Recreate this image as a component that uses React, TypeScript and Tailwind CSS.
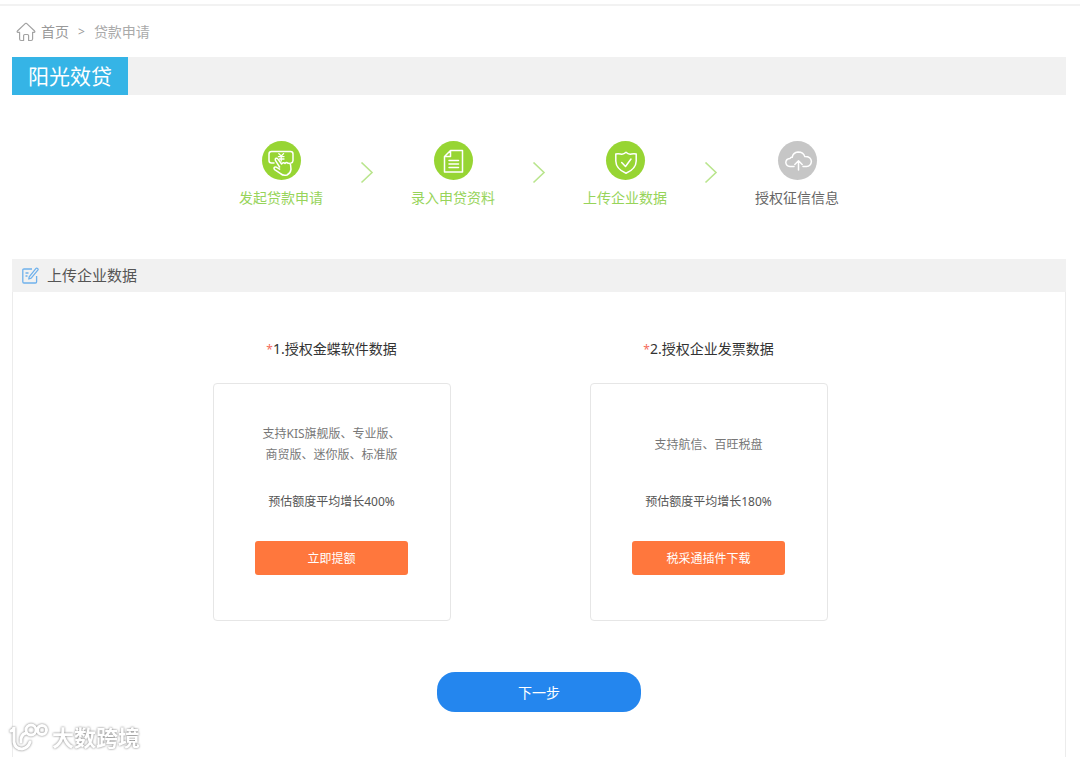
import React from 'react';

type StepIcon = 'apply' | 'document' | 'shield' | 'cloud';

interface Step {
  label: string;
  icon: StepIcon;
  done: boolean;
}

interface DataSource {
  title: string;
  lines: string[];
  estimate: string;
  action: string;
}

const steps: Step[] = [
  { label: '发起贷款申请', icon: 'apply', done: true },
  { label: '录入申贷资料', icon: 'document', done: true },
  { label: '上传企业数据', icon: 'shield', done: true },
  { label: '授权征信信息', icon: 'cloud', done: false },
];

const sources: DataSource[] = [
  {
    title: '1.授权金蝶软件数据',
    lines: ['支持KIS旗舰版、专业版、', '商贸版、迷你版、标准版'],
    estimate: '预估额度平均增长400%',
    action: '立即提额',
  },
  {
    title: '2.授权企业发票数据',
    lines: ['支持航信、百旺税盘'],
    estimate: '预估额度平均增长180%',
    action: '税采通插件下载',
  },
];

const iconShapes: Record<StepIcon, React.ReactNode> = {
  apply: (
    <>
      <path d="M12 22H9.5Q7 22 7 19.5V13Q7 10.5 9.5 10.5H28.5Q31 10.5 31 13V19.5Q31 21.5 29 22" />
      <path
        d="M17.6 26L13.4 19.4Q12.8 17.8 14 17.3Q15.2 16.9 16 18.1L19.6 23Q21.4 20.8 23 22.4Q24.6 20.6 26 22.4Q28 21.6 28.6 24L29 28.4Q28.6 32.2 25 34Q21 35 18.6 32.6L12.6 28.6Q11.4 27.2 12.6 26.2Q13.8 25.6 15.2 26.6L17.6 28.2"
        fill="#97d533"
      />
      <path d="M16.8 12.6L19.2 15L21.6 12.6M19.2 15V20M16.4 15.6H22M17.4 18H22" strokeWidth="1.3" />
    </>
  ),
  document: (
    <>
      <path d="M16.5 9.5H28.5V31H10.5V15.5ZM16.5 9.5V15.5H10.5" />
      <path d="M15 19.5H24.5M15 23H24.5M15 26.5H24.5" />
    </>
  ),
  shield: (
    <>
      <path d="M20 11.3Q17.5 13.8 14.5 13Q12 12.4 9.8 13V20Q10 28 20 32.3Q30 28 30.2 20V13Q28 12.4 25.5 13Q22.5 13.8 20 11.3Z" />
      <path d="M15.7 21.5L19.5 25.5L25 18" />
    </>
  ),
  cloud: (
    <>
      <path d="M16 25.5H12Q8 25 7.8 21.5Q8 17.8 12 17.5Q12.6 16 14.2 16.3Q15 11.5 20 11Q25.5 11 26.8 15.6Q33 15.5 33.4 20.5Q33 25.2 28.5 25.5H25" />
      <path d="M20.5 29V20M16.8 23.5L20.5 19.8L24.2 23.5" />
    </>
  ),
};

function HomeIcon() {
  return (
    <svg width="20" height="20" viewBox="0 0 20 20" fill="none" stroke="#a3a3a3" strokeWidth="1.2" strokeLinejoin="round" strokeLinecap="round" aria-hidden="true">
      <path d="M3.6 10.4H1.8Q0.6 10 1.4 9L9.2 1.6Q10 1 10.8 1.6L18.6 9Q19.4 10 18.2 10.4H16.6V17Q16.5 18.4 15.2 18.5H12.6V13.6Q12.5 12.6 11.5 12.5H8.7Q7.7 12.6 7.6 13.6V18.5H5Q3.7 18.4 3.6 17Z" />
    </svg>
  );
}

function EditIcon() {
  return (
    <svg width="17" height="17" viewBox="0 0 17 17" fill="none" stroke="#6fb1ec" strokeWidth="1.3" strokeLinejoin="round" aria-hidden="true">
      <path d="M10 2H2Q0.8 2 0.8 3.2V14.8Q0.8 16 2 16H13.4Q14.6 16 14.6 14.8V9" />
      <path d="M7.2 9.8L13.8 1.6Q14.6 0.7 15.6 1.5Q16.5 2.3 15.8 3.2L9.2 11.2L6.8 12Z" />
      <path d="M3.5 6H6.5M3.5 9H5.5" />
    </svg>
  );
}

function StepArrow() {
  return (
    <svg className="mb-1 shrink-0" width="14" height="22" viewBox="0 0 14 22" fill="none" stroke="#b9e58d" strokeWidth="1.6" aria-hidden="true">
      <path d="M1.5 0.5L12 10.5L1.5 20.5" />
    </svg>
  );
}

function StepItem({ step }: { step: Step }) {
  return (
    <div className="flex flex-col items-center gap-2">
      <span className={`h-[39px] w-[39px] rounded-full ${step.done ? 'bg-[#97d533]' : 'bg-[#c6c6c6]'}`}>
        <svg width="39" height="39" viewBox="0 0 39 39" fill="none" stroke="#fff" strokeWidth="1.5" strokeLinejoin="round" strokeLinecap="round" aria-hidden="true">
          {iconShapes[step.icon]}
        </svg>
      </span>
      <span className={`whitespace-nowrap text-sm ${step.done ? 'text-[#97d45a]' : 'text-[#666]'}`}>{step.label}</span>
    </div>
  );
}

function SourceCard({ source }: { source: DataSource }) {
  return (
    <div className="flex flex-col items-center gap-6">
      <h3 className="text-sm leading-5 text-[#333]">
        <span className="text-xs text-[#f56c5c]">*</span>
        {source.title}
      </h3>
      <div className="flex h-[238px] w-[238px] flex-col items-center rounded-sm border border-[#e6e6e6] pt-[39px] text-xs">
        <div className="flex h-[42px] flex-col justify-center text-center leading-[21px] text-[#777]">
          {source.lines.map((line) => (
            <p key={line}>{line}</p>
          ))}
        </div>
        <p className="mt-[27px] leading-5 text-[#555]">{source.estimate}</p>
        <button type="button" className="mt-[29px] h-[34px] w-[153px] rounded-[3px] bg-[#ff773d] pt-px text-white">
          {source.action}
        </button>
      </div>
    </div>
  );
}

function Watermark() {
  return (
    <div className="pointer-events-none fixed bottom-1 left-2 flex items-center gap-1 drop-shadow-[0_0_1px_#777]">
      <svg width="40" height="30" viewBox="0 0 40 30" fill="none" stroke="#fff" strokeWidth="3" strokeLinecap="round" aria-hidden="true">
        <path d="M3 9Q6 8 6 5V20Q7 27 14 27Q20 26 22 20" />
        <path d="M18 11Q12 13 13 20" />
        <circle cx="23" cy="8" r="5" />
        <circle cx="34" cy="8" r="4.5" />
      </svg>
      <span className="text-[22px] font-bold leading-8 text-white">大数跨境</span>
    </div>
  );
}

export default function App() {
  return (
    <div className="flex min-h-screen flex-col bg-white pt-1 font-['Noto_Sans','Noto_Sans_CJK_SC',sans-serif]">
      <div className="h-[2px] bg-[#f2f2f2]" />
      <div className="flex flex-1 flex-col pl-3 pr-[14px]">
        <nav className="flex h-[51px] items-center pl-1 text-sm text-[#999]">
          <a href="#" className="flex items-center gap-[5px]">
            <HomeIcon />
            首页
          </a>
          <span className="px-[9px] text-xs">&gt;</span>
          <span className="text-[#aaa]">贷款申请</span>
        </nav>

        <header className="flex bg-[#f1f1f1]">
          <h1 className="bg-[#35b4e6] px-4 text-[21px] leading-[38px] text-white">阳光效贷</h1>
        </header>

        <div className="flex items-center justify-center gap-[37px] pb-[51px] pt-[46px]">
          {steps.map((step, index) => (
            <React.Fragment key={step.label}>
              {index > 0 && <StepArrow />}
              <StepItem step={step} />
            </React.Fragment>
          ))}
        </div>

        <div className="flex h-[33px] items-center gap-2 bg-[#f1f1f1] pl-[10px]">
          <EditIcon />
          <h2 className="text-[15px] text-[#555]">上传企业数据</h2>
        </div>

        <section className="flex flex-1 flex-col items-center border-x border-[#ececec] pb-11 pt-[47px]">
          <div className="flex gap-[139px] pr-[38px]">
            {sources.map((source) => (
              <SourceCard key={source.title} source={source} />
            ))}
          </div>
          <button type="button" className="mt-[51px] h-10 w-[204px] rounded-[18px] bg-[#2486ee] pt-px text-sm text-white">
            下一步
          </button>
        </section>
      </div>
      <Watermark />
    </div>
  );
}
